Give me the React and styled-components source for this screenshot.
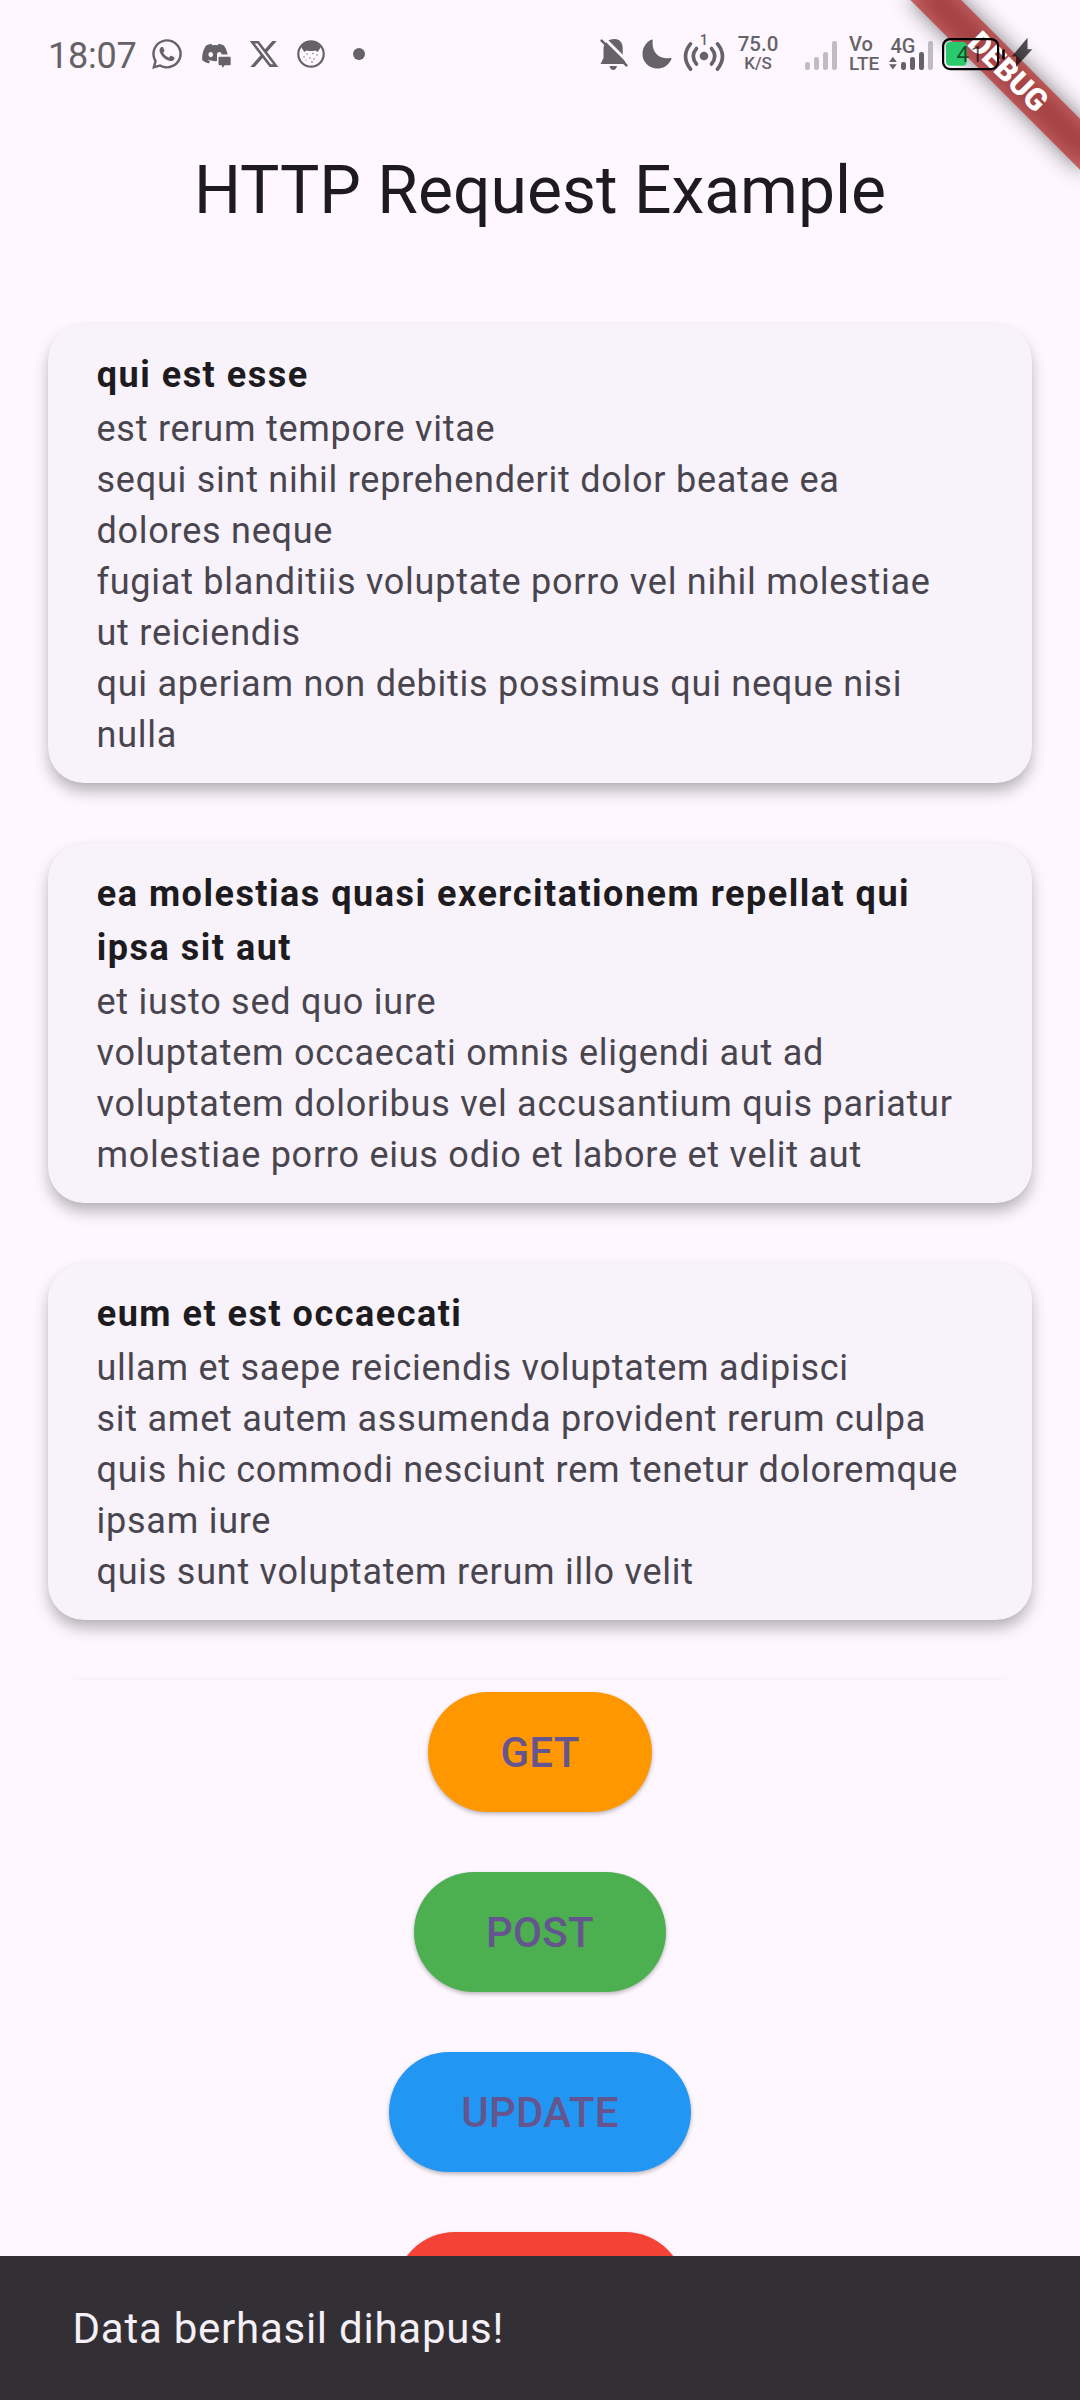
import React from "react";
import styled, { createGlobalStyle } from "styled-components";
import { FaWhatsapp, FaDiscord } from "react-icons/fa";
import { FaXTwitter } from "react-icons/fa6";

const Global = createGlobalStyle`
  * { box-sizing: border-box; }
  html, body { margin: 0; padding: 0; background: #fef7ff; }
  body { font-family: Roboto, "Liberation Sans", sans-serif; color: #1d1b20; }
  h1, h2, p { margin: 0; font-weight: 400; }
`;

const Screen = styled.div`
  position: relative;
  display: flex;
  flex-direction: column;
  width: 1080px;
  height: 2400px;
  overflow: hidden;
  background: #fef7ff;
`;

const StatusBar = styled.header`
  position: relative;
  z-index: 2;
  display: flex;
  justify-content: space-between;
  height: 108px;
  padding: 0 46px 0 48px;
  color: #666368;
`;

const StatusGroup = styled.div`
  display: flex;
  align-items: center;
  height: 108px;
`;

const Clock = styled.span`
  width: 90px;
  padding-top: 4px;
  font-size: 36px;
  line-height: 42px;
  letter-spacing: -0.2px;
  white-space: nowrap;
`;

const Slot = styled.span`
  display: flex;
  flex: none;
  align-items: center;
  justify-content: center;
  width: ${(p) => p.$w}px;
  margin-left: ${(p) => p.$gap || 0}px;

  svg {
    flex: none;
  }
`;

const Stack = styled.span`
  display: flex;
  flex: none;
  flex-direction: column;
  align-items: ${(p) => p.$align || "center"};
  width: ${(p) => p.$w}px;
  margin-left: ${(p) => p.$gap || 0}px;
  font-weight: 500;
  line-height: 19px;
  white-space: nowrap;
`;

const Tiny = styled.span`
  font-size: ${(p) => p.$size}px;
`;

const RibbonLayer = styled.div`
  position: absolute;
  z-index: 1;
  top: 0;
  left: 1080px;
  width: 0;
  height: 0;
  transform: rotate(45deg);
`;

const RibbonShadow = styled.div`
  position: absolute;
  left: -120px;
  top: 84px;
  width: 240px;
  height: 36px;
  background: rgba(0, 0, 0, 0.5);
  filter: blur(11px);
`;

const Ribbon = styled.div`
  position: absolute;
  left: -120px;
  top: 84px;
  width: 240px;
  height: 36px;
  background: rgba(183, 28, 28, 0.627);
  color: #fff;
  font-size: 30.6px;
  font-weight: 900;
  line-height: 36px;
  text-align: center;
`;

const Title = styled.h1`
  height: 213px;
  padding-top: 41px;
  font-size: 66px;
  line-height: 84px;
  text-align: center;
`;

const PostList = styled.main`
  display: flex;
  flex: none;
  flex-direction: column;
  gap: 60px;
  height: 1359px;
  padding: 3px 48px 0;
  overflow: hidden;
`;

const Card = styled.article`
  flex: none;
  min-height: 96px;
  padding: 24px 48px;
  border-radius: 36px;
  background: #f8f2fa;
  box-shadow: 0 9px 15px -1px rgba(0, 0, 0, 0.29), 0 0 2px rgba(0, 0, 0, 0.05);
`;

const PostTitle = styled.h2`
  padding-left: 0.75px;
  font-size: 36px;
  font-weight: 700;
  line-height: 54px;
  letter-spacing: 1.5px;
`;

const PostBody = styled.p`
  padding: 2px 0 0 0.5px;
  margin-bottom: -2px;
  color: #49454e;
  font-size: 36px;
  line-height: 51px;
  letter-spacing: 0.75px;
  white-space: pre-line;
`;

const Actions = styled.section`
  display: flex;
  flex-direction: column;
  align-items: center;
  gap: 60px;
  padding-top: 12px;
`;

const Action = styled.button`
  flex: none;
  width: ${(p) => p.$w}px;
  height: 120px;
  padding: 2px 0 0;
  border: 0;
  border-radius: 60px;
  background: ${(p) => p.$color};
  box-shadow: 0 2px 4px rgba(0, 0, 0, 0.28);
  color: #65558f;
  font-family: inherit;
  font-size: 42px;
  font-weight: 500;
  line-height: 60px;
  letter-spacing: 0.3px;
`;

const Snackbar = styled.footer`
  position: absolute;
  z-index: 3;
  left: 0;
  right: 0;
  bottom: 0;
  height: 144px;
  padding: 43px 72px 0 72.5px;
  background: #322f35;
  color: #f5eff7;
  font-size: 42px;
  line-height: 60px;
  letter-spacing: 0.75px;
`;

const posts = [
  {
    title: "qui est esse",
    body: "est rerum tempore vitae\nsequi sint nihil reprehenderit dolor beatae ea\ndolores neque\nfugiat blanditiis voluptate porro vel nihil molestiae\nut reiciendis\nqui aperiam non debitis possimus qui neque nisi\nnulla",
  },
  {
    title: "ea molestias quasi exercitationem repellat qui ipsa sit aut",
    body: "et iusto sed quo iure\nvoluptatem occaecati omnis eligendi aut ad\nvoluptatem doloribus vel accusantium quis pariatur\nmolestiae porro eius odio et labore et velit aut",
  },
  {
    title: "eum et est occaecati",
    body: "ullam et saepe reiciendis voluptatem adipisci\nsit amet autem assumenda provident rerum culpa\nquis hic commodi nesciunt rem tenetur doloremque\nipsam iure\nquis sunt voluptatem rerum illo velit",
  },
];

const actions = [
  { label: "GET", color: "#ff9800", width: 224 },
  { label: "POST", color: "#4caf50", width: 252 },
  { label: "UPDATE", color: "#2196f3", width: 302 },
  { label: "", color: "#f44336", width: 290 },
];

const FaceIcon = () => (
  <svg width="28" height="28" viewBox="0 0 28 28">
    <circle cx="14" cy="14" r="12.700" fill="none" stroke="currentColor" strokeWidth="2.200" />
    <path d="M4 6.500Q14-4 24 6.500Q22.800 9.500 20.500 12L18.500 10.500Q14 11.500 9.500 10.500L7.500 12Q5.200 9.500 4 6.500Z" fill="currentColor" />
    <g fill="currentColor">
      <circle cx="10" cy="14" r=".7" /><circle cx="16" cy="13.500" r=".7" /><circle cx="20" cy="15" r=".7" />
      <circle cx="7" cy="17" r=".7" /><circle cx="13" cy="18" r=".7" /><circle cx="17" cy="19" r=".7" />
      <circle cx="15" cy="22" r=".8" /><circle cx="9" cy="20" r=".6" />
    </g>
  </svg>
);

const DiscordIcon = () => (
  <svg width="30" height="28" viewBox="0 0 30 28">
    <FaDiscord size={28} x="0" y="-0.4" />
    <path d="M16 14.500H30V28H16Z" fill="#fef7ff" />
    <path d="M18.500 16.700H28.500Q29.700 16.700 29.700 18V24Q29.700 25.300 28.500 25.300H23.500L21.700 28L20.700 25.300H18.500Q17.500 25.300 17.500 24V18Q17.500 16.700 18.500 16.700Z" fill="currentColor" />
  </svg>
);

const BellOffIcon = () => (
  <svg width="28" height="32" viewBox="0 0 28 32">
    <path d="M14.500 1C20 1 22.700 5 22.700 10V18L26 26H.5L3.500 20V11C3.500 5 8 1 14.500 1Z" fill="currentColor" />
    <path d="M9.500 28H17Q16 32 13.200 32T9.500 28Z" fill="currentColor" />
    <path d="M0 8V0H8L5 1.500L2 4.500Z" fill="#fef7ff" />
    <path d="M3.500-.5L30 26" stroke="#fef7ff" strokeWidth="3" />
    <path d="M1.600 2.600L26.400 27.400" stroke="currentColor" strokeWidth="2.600" strokeLinecap="round" />
  </svg>
);

const MoonIcon = () => (
  <svg width="30" height="30" viewBox="0 0 30 30">
    <path d="M8.500 1Q11-.5 10.700 2C9.500 12 16 21 27.500 19Q30.500 18.500 29 21C26 27 21 29.500 15 29.500C7 29.500.5 23 .5 15C.5 9 3.500 4 8.500 1Z" fill="currentColor" />
  </svg>
);

const HotspotIcon = () => (
  <svg width="42" height="46" viewBox="0 0 42 46">
    <g fill="none" stroke="currentColor" strokeWidth="3.600" strokeLinecap="round">
      <path d="M7.500 12.800Q-2.500 25 7.500 38.200M34.500 12.800Q44.500 25 34.500 38.200" />
      <path d="M13.500 17.500Q7 25 13.500 33M28.500 17.500Q35 25 28.500 33" />
    </g>
    <circle cx="21" cy="25" r="4.300" fill="currentColor" />
    <text x="21" y="14" textAnchor="middle" fontSize="14" fontWeight="500" fill="currentColor">1</text>
  </svg>
);

const SignalIcon = () => (
  <svg width="32" height="32" viewBox="0 0 32 32">
    {[8, 13, 18, 29].map((h, i) => (
      <rect key={h} x={i * 9} y={32 - h} width="5" height={h} rx="2.200" fill="currentColor" opacity="0.4" />
    ))}
  </svg>
);

const MobileDataIcon = () => (
  <svg width="46" height="40" viewBox="0 0 46 40">
    <text x="1.500" y="18.600" fontSize="20" fontWeight="500" fill="currentColor">4G</text>
    <path d="M0 28L3.900 22.700L7.800 28ZM0 30.200H7.800L3.900 35.500Z" fill="currentColor" />
    <rect x="12" y="28" width="5" height="8" rx="2.200" fill="currentColor" />
    <rect x="21" y="23" width="5" height="13" rx="2.200" fill="currentColor" />
    <rect x="30" y="18" width="5" height="18" rx="2.200" fill="currentColor" />
    <rect x="39" y="7" width="5" height="29" rx="2.200" fill="currentColor" opacity=".4" />
  </svg>
);

const BatteryIcon = () => (
  <svg width="92" height="34" viewBox="0 0 92 34">
    <rect x="4" y="5" width="20.700" height="23.700" rx="4" fill="#2ac96b" />
    <rect x="1.100" y="2.100" width="55" height="30" rx="7" fill="none" stroke="#000" strokeWidth="2.200" />
    <path d="M61.500 12.500V22.300" stroke="#000" strokeWidth="2.600" />
    <text x="14.500" y="24.700" fontSize="22.500" letterSpacing="1.500" fill="#000" opacity=".62">41</text>
    <path d="M85.500 .7V12.300H90.300L74 30V19.500H69.700Z" fill="#000" opacity=".68" />
  </svg>
);

export default function App() {
  return (
    <Screen>
      <Global />
      <RibbonLayer>
        <RibbonShadow />
        <Ribbon>DEBUG</Ribbon>
      </RibbonLayer>
      <StatusBar>
        <StatusGroup>
          <Clock>18:07</Clock>
          <Slot $w={34} $gap={12}><FaWhatsapp size={34} /></Slot>
          <Slot $w={30} $gap={17}><DiscordIcon /></Slot>
          <Slot $w={29} $gap={18}><FaXTwitter size={32} /></Slot>
          <Slot $w={28} $gap={19}><FaceIcon /></Slot>
          <Slot $w={12} $gap={28}>
            <svg width="12" height="12"><circle cx="6" cy="6" r="6" fill="currentColor" /></svg>
          </Slot>
        </StatusGroup>
        <StatusGroup>
          <Slot $w={28}><BellOffIcon /></Slot>
          <Slot $w={30} $gap={14}><MoonIcon /></Slot>
          <Slot $w={42} $gap={11}><HotspotIcon /></Slot>
          <Stack $w={42} $gap={12}>
            <Tiny $size={20.5}>75.0</Tiny>
            <Tiny $size={17}>K/S</Tiny>
          </Stack>
          <Slot $w={32} $gap={26}><SignalIcon /></Slot>
          <Stack $w={30} $gap={12} $align="flex-start">
            <Tiny $size={20}>Vo</Tiny>
            <Tiny $size={19}>LTE</Tiny>
          </Stack>
          <Slot $w={46} $gap={10}><MobileDataIcon /></Slot>
          <Slot $w={92} $gap={7}><BatteryIcon /></Slot>
        </StatusGroup>
      </StatusBar>
      <Title>HTTP Request Example</Title>
      <PostList>
        {posts.map((post) => (
          <Card key={post.title}>
            <PostTitle>{post.title}</PostTitle>
            <PostBody>{post.body}</PostBody>
          </Card>
        ))}
        <Card />
      </PostList>
      <Actions>
        {actions.map((a) => (
          <Action key={a.color} $color={a.color} $w={a.width}>{a.label}</Action>
        ))}
      </Actions>
      <Snackbar>Data berhasil dihapus!</Snackbar>
    </Screen>
  );
}
